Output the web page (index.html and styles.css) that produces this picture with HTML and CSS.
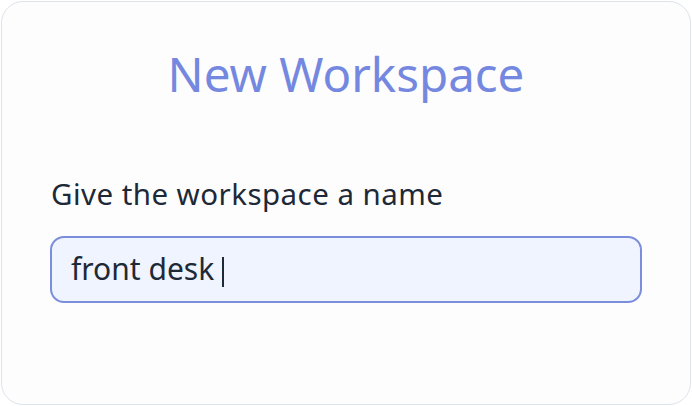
FILE: index.html
```html
<!DOCTYPE html>
<html>
<head>
<meta charset="utf-8">
<link rel="stylesheet" href="styles.css">
</head>
<body>
<div class="card">
  <h1 class="title">New Workspace</h1>
  <div class="field">
    <label class="label">Give the workspace a name</label>
    <div class="input"><span class="value">front desk</span><span class="caret"></span></div>
  </div>
</div>
</body>
</html>
```
FILE: styles.css
```css
html, body {
  margin: 0;
  padding: 0;
  background: #ffffff;
}
body {
  padding: 1px;
  font-family: "Noto Sans", "Open Sans", sans-serif;
}
.card {
  box-sizing: border-box;
  width: 690px;
  height: 404px;
  border: 1.5px solid #dde3ec;
  border-radius: 22px;
  background: #fdfdfe;
  padding: 0 48px;
}
.title {
  margin: 40px 0 0;
  text-align: center;
  font-size: 47.5px;
  font-weight: 400;
  line-height: 64px;
  color: #7588e0;
}
.field {
  margin-top: 69px;
}
.label {
  display: block;
  font-size: 29.5px;
  line-height: 38px;
  letter-spacing: 0.45px;
  color: #1e2937;
  margin-left: 1px;
}
.input {
  box-sizing: border-box;
  margin-top: 23px;
  height: 67px;
  border: 2px solid #7a8edc;
  border-radius: 14px;
  background: #eff4fe;
  display: flex;
  align-items: center;
  padding-left: 19px;
  font-size: 30px;
  color: #1e2937;
}
.value {
  margin-top: -2px;
}
.caret {
  display: inline-block;
  width: 2px;
  height: 30px;
  background: #1e2937;
  margin-left: 8px;
  margin-top: 5px;
}
```
